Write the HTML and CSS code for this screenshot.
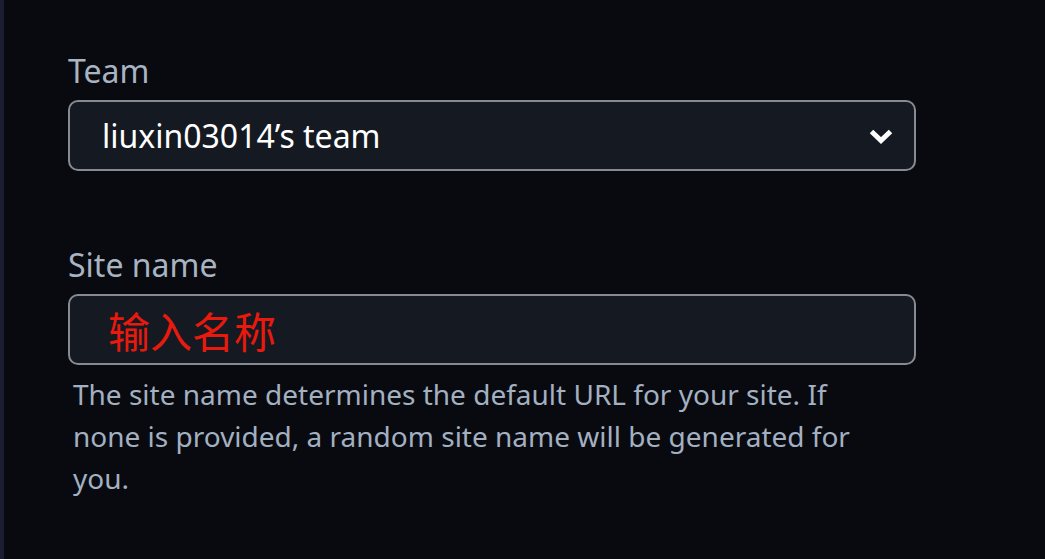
FILE: index.html
```html
<!DOCTYPE html>
<html>
<head>
<meta charset="utf-8">
<link rel="stylesheet" href="styles.css">
</head>
<body>
<div class="strip"></div>
<main class="form">
  <div class="field">
    <label class="label">Team</label>
    <div class="select">
      <span class="select-text">liuxin03014’s team</span>
      <svg class="chev" width="26" height="18" viewBox="0 0 26 18"><path d="M3.5 4.5 L13 13.5 L22.5 4.5" fill="none" stroke="#fff" stroke-width="5" stroke-linejoin="miter"/></svg>
    </div>
  </div>
  <div class="field field2">
    <label class="label">Site name</label>
    <div class="input"><span class="input-text">输入名称</span></div>
    <p class="help">The site name determines the default URL for your site. If none is provided, a random site name will be generated for you.</p>
  </div>
</main>
</body>
</html>
```
FILE: styles.css
```css
html, body {
  margin: 0;
  height: 100%;
  background: #080a0f;
}
body {
  display: flex;
  font-family: "Noto Sans", "Open Sans", sans-serif;
}
.strip {
  width: 4px;
  background: #1b1d33;
  flex: none;
}
.form {
  padding: 52px 0 0 64px;
  width: 848px;
}
.field {
  display: flex;
  flex-direction: column;
}
.field2 {
  margin-top: 75px;
}
.label {
  color: #a9b4c2;
  font-size: 32px;
  line-height: 38px;
  margin-bottom: 10px;
}
.select, .input {
  box-sizing: border-box;
  height: 71px;
  border: 2px solid #868b93;
  border-radius: 10px;
  background: #151921;
  display: flex;
  align-items: center;
}
.select {
  padding: 0 20px 0 32px;
  justify-content: space-between;
}
.select-text {
  color: #ffffff;
  font-size: 32px;
}
.input {
  padding-left: 38px;
}
.input-text {
  color: #e81a0e;
  font-size: 42px;
  font-family: "Noto Sans CJK SC", sans-serif;
}
.help {
  margin: 8px 0 0 5px;
  width: 790px;
  color: #a3b0c1;
  font-size: 28px;
  line-height: 42px;
}
```
